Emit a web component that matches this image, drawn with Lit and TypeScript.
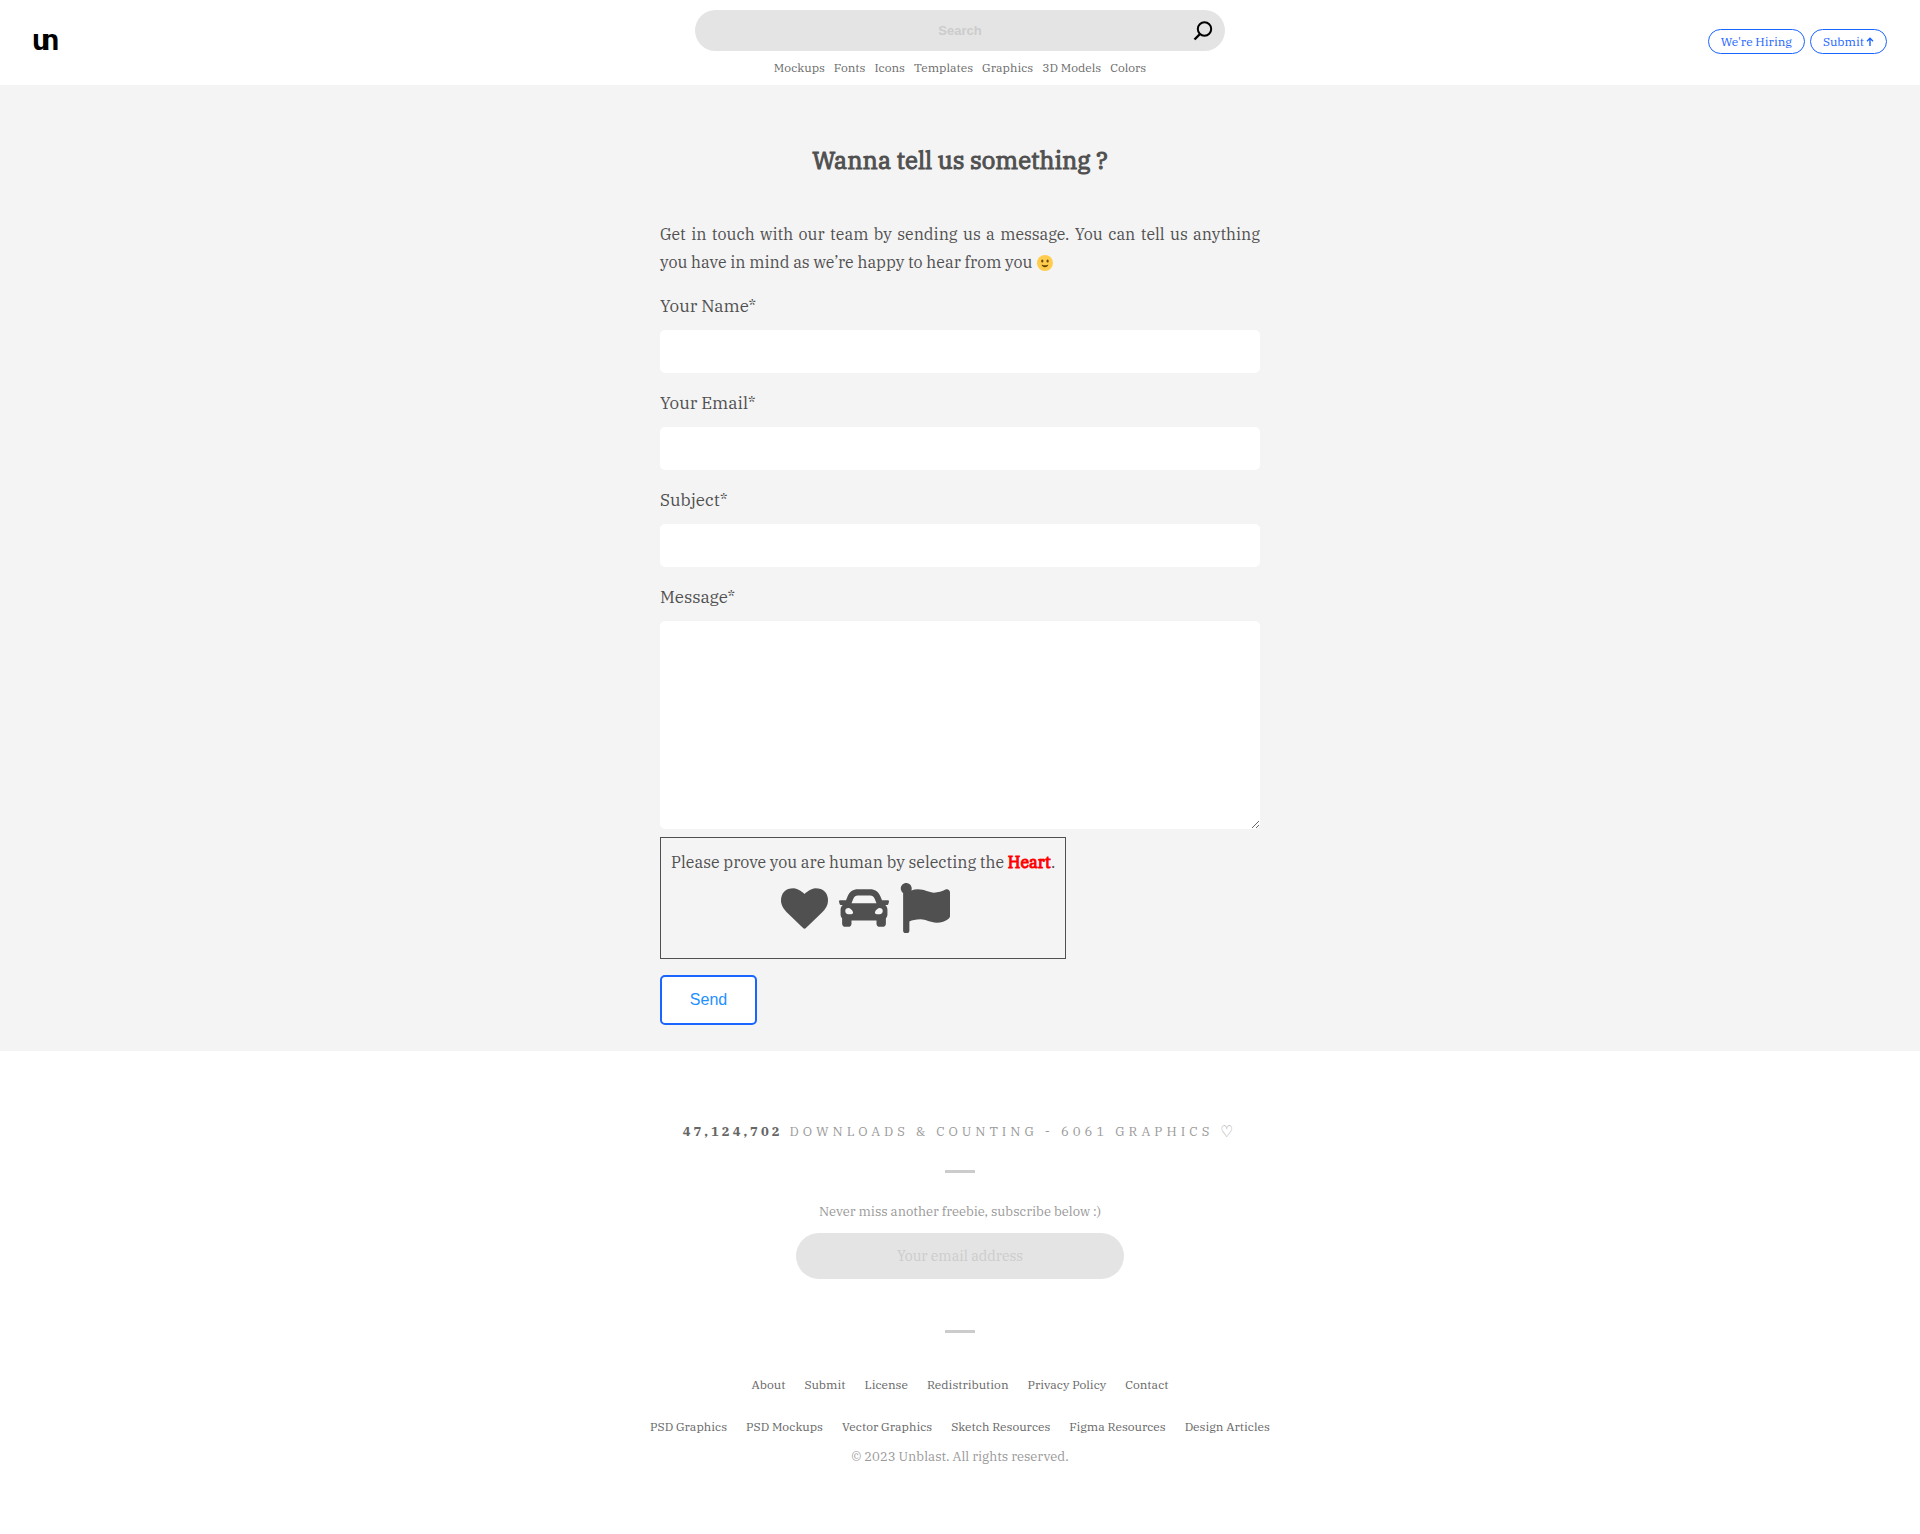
import { LitElement, html, css } from "lit";
import { customElement } from "lit/decorators.js";

const NAV = ["Mockups", "Fonts", "Icons", "Templates", "Graphics", "3D Models", "Colors"];
const SITE_LINKS = ["About", "Submit", "License", "Redistribution", "Privacy Policy", "Contact"];
const TOPIC_LINKS = [
  "PSD Graphics",
  "PSD Mockups",
  "Vector Graphics",
  "Sketch Resources",
  "Figma Resources",
  "Design Articles",
];
const FIELDS = [
  { id: "name", label: "Your Name*", type: "text" },
  { id: "email", label: "Your Email*", type: "email" },
  { id: "subject", label: "Subject*", type: "text" },
];

const links = (items: string[]) => items.map((t) => html`<a href="#">${t}</a>`);

@customElement("app-root")
export class AppRoot extends LitElement {
  static styles = css`
    :host {
      display: block;
      background: #fff;
      color: #505050;
      font-family: "IBM Plex Serif", "DejaVu Serif Condensed", "DejaVu Serif", serif;
      font-size: 16px;
    }
    * {
      box-sizing: border-box;
    }
    a {
      color: inherit;
      text-decoration: none;
    }
    input,
    textarea,
    button {
      font-family: inherit;
      margin: 0;
      outline: none;
    }
    .header {
      display: grid;
      grid-template-columns: 1fr minmax(0, 530px) 1fr;
      align-items: center;
      padding: 10px 33px 8px;
    }
    .brand,
    .actions {
      display: flex;
      padding-bottom: 4px;
    }
    .logo {
      display: block;
      width: 26px;
      height: 18px;
    }
    .logo svg {
      display: block;
      overflow: visible;
    }
    .search {
      display: flex;
      align-items: center;
      height: 41px;
      padding: 0 12px 0 45px;
      border-radius: 21px;
      background: #e4e4e4;
    }
    .search input {
      flex: 1;
      min-width: 0;
      border: 0;
      background: none;
      text-align: center;
      font: bold 13px "Liberation Sans", sans-serif;
    }
    ::placeholder {
      color: #ccc;
      opacity: 1;
    }
    .search button {
      display: flex;
      width: 20px;
      height: 20px;
      padding: 0;
      border: 0;
      background: none;
    }
    .nav {
      display: flex;
      justify-content: center;
      gap: 9px;
      margin-top: 8px;
      font-size: 12px;
      line-height: 18px;
      color: #6b6b6b;
    }
    .actions {
      justify-content: flex-end;
      gap: 5px;
    }
    .pill {
      display: flex;
      align-items: center;
      gap: 2px;
      height: 25px;
      padding: 0 12px;
      border: 1px solid #1a64ff;
      border-radius: 13px;
      color: #1a64ff;
      font-size: 12px;
    }
    .main {
      background: #f4f4f4;
      padding: 58px 20px 26px;
    }
    .column {
      max-width: 600px;
      margin: 0 auto;
    }
    h1 {
      margin: 0 0 43px;
      text-align: center;
      font-size: 24px;
      line-height: 34px;
      font-weight: 400;
      -webkit-text-stroke: 1px;
    }
    .intro {
      margin: 0 0 16px;
      text-align: justify;
      line-height: 28px;
    }
    .emoji {
      vertical-align: -3px;
    }
    .field {
      display: flex;
      flex-direction: column;
      gap: 10px;
      margin-bottom: 16px;
    }
    .field label {
      font-size: 17px;
      line-height: 28px;
    }
    .field input,
    .field textarea {
      display: block;
      width: 100%;
      height: 43px;
      padding: 10px;
      border: 0;
      border-radius: 5px;
      background: #fff;
      font-size: 16px;
    }
    .field textarea {
      height: 208px;
      resize: vertical;
    }
    .field.message {
      margin-bottom: 8px;
    }
    .captcha {
      width: fit-content;
      height: 122px;
      margin: 0 0 16px;
      padding: 10px;
      border: 1px solid #505050;
      text-align: center;
    }
    .captcha legend {
      float: left;
      width: 100%;
      padding: 0;
      line-height: 28px;
    }
    .captcha strong {
      color: #f00;
      font-weight: 400;
      -webkit-text-stroke: 1px;
    }
    .choices {
      clear: both;
      display: flex;
      justify-content: center;
      gap: 11px;
      padding: 7px 0 0 5px;
    }
    .choices label {
      display: flex;
      align-items: center;
    }
    .choices input {
      position: absolute;
      opacity: 0;
    }
    .send {
      display: block;
      width: 97px;
      height: 50px;
      border: 2px solid #1a64ff;
      border-radius: 5px;
      background: #fff;
      color: #1e90ff;
      font: 16px "Liberation Sans", sans-serif;
    }
    .footer {
      display: flex;
      flex-direction: column;
      align-items: center;
      padding: 67px 20px 64px;
      color: #999;
      font-size: 13px;
    }
    .stats {
      margin: 0;
      letter-spacing: 4px;
      line-height: 28px;
    }
    .stats strong {
      color: #666;
      letter-spacing: 3px;
    }
    .heart {
      font-size: 16px;
      line-height: 1;
      vertical-align: -1px;
    }
    .dash {
      width: 30px;
      height: 3px;
      margin: 24px 0;
      border: 0;
      background: #ccc;
    }
    .subscribe {
      display: flex;
      flex-direction: column;
      align-items: center;
      gap: 6px;
      width: 328px;
      max-width: 100%;
      margin-bottom: 27px;
    }
    .subscribe label {
      line-height: 30px;
    }
    .subscribe input {
      width: 100%;
      height: 46px;
      border: 0;
      border-radius: 23px;
      background: #e4e4e4;
      text-align: center;
      font-size: 14px;
    }
    .links {
      display: flex;
      flex-wrap: wrap;
      justify-content: center;
      gap: 0 19px;
      margin-top: 14px;
      color: #666;
      font-size: 12px;
      line-height: 28px;
    }
    .copyright {
      margin: 2px 0 0;
      line-height: 28px;
    }
  `;

  render() {
    return html`
      <header class="header">
        <div class="brand">
          <a class="logo" href="#" aria-label="un">
            <svg width="26" height="18" viewBox="0 0 26 18">
              <text x="-1 8" y="17" font-family="Liberation Sans, sans-serif" font-weight="bold" font-size="30">un</text>
            </svg>
          </a>
        </div>
        <div>
          <form class="search" role="search">
            <input type="search" placeholder="Search" aria-label="Search" />
            <button type="button" aria-label="Search">
              <svg width="20" height="20" viewBox="0 0 20 20" fill="none" stroke="#000" stroke-width="2">
                <circle cx="11.5" cy="8" r="6.7" />
                <path d="M7 13 1.5 18.5" stroke-width="2.4" />
              </svg>
            </button>
          </form>
          <nav class="nav">${links(NAV)}</nav>
        </div>
        <div class="actions">
          <a class="pill" href="#">We're Hiring</a>
          <a class="pill" href="#"
            >Submit
            <svg width="8" height="9" viewBox="0 0 8 9" fill="none" stroke="currentColor" stroke-width="1.4">
              <path d="M4 9V1.2M1 4.2 4 1.2 7 4.2" />
            </svg>
          </a>
        </div>
      </header>
      <main class="main">
        <div class="column">
          <h1>Wanna tell us something ?</h1>
          <p class="intro">
            Get in touch with our team by sending us a message. You can tell us anything you have in mind as we’re happy
            to hear from you
            <svg class="emoji" role="img" aria-label="Slightly smiling face" width="17" height="16" viewBox="-2 0 38 36">
              <circle cx="18" cy="18" r="18" fill="#ffcc4d" />
              <path
                d="M10.500 22.300c.3 1.200 2.300 5.200 7.500 5.200s7.300-4 7.500-5.200c.1-.4-.4-.8-.9-.5-.1 0-2.400 1.200-6.600 1.200s-6.500-1.200-6.600-1.200c-.5-.3-1 .1-.9.5Z"
                fill="#664500"
              />
              <ellipse cx="12" cy="13.500" rx="2.500" ry="3.500" fill="#664500" />
              <ellipse cx="24" cy="13.500" rx="2.500" ry="3.500" fill="#664500" />
            </svg>
          </p>
          <form>
            ${FIELDS.map(
              (f) => html`<div class="field">
                <label for=${f.id}>${f.label}</label>
                <input id=${f.id} type=${f.type} />
              </div>`,
            )}
            <div class="field message">
              <label for="message">Message*</label>
              <textarea id="message"></textarea>
            </div>
            <fieldset class="captcha">
              <legend>Please prove you are human by selecting the <strong>Heart</strong>.</legend>
              <div class="choices">
                <label>
                  <input type="radio" name="human" aria-label="Heart" />
                  <svg width="47" height="47" viewBox="0 0 1792 1792" fill="currentColor">
                    <path
                      d="M896 1664q-26 0-44-18l-624-602q-10-8-27.500-26T145 952.500 77 855 23.500 734 0 596q0-220 127-344t351-124q62 0 126.500 21.500t120 58T820 276t76 68q36-36 76-68t95.500-68.500 120-58T1314 128q224 0 351 124t127 344q0 221-229 450l-623 600q-18 18-44 18z"
                    />
                  </svg>
                </label>
                <label>
                  <input type="radio" name="human" aria-label="Car" />
                  <svg width="50" height="50" viewBox="0 0 512 512" fill="currentColor">
                    <path
                      d="M499.990 176h-59.870l-16.640-41.600C406.380 91.630 365.570 64 319.500 64h-127c-46.060 0-86.880 27.630-103.990 70.400L71.870 176H12.010C4.200 176-1.530 183.340.370 190.910l6 24C7.700 220.250 12.500 224 18.010 224h20.070C24.650 235.730 16 252.780 16 272v48c0 16.120 6.160 30.670 16 41.930V416c0 17.670 14.330 32 32 32h32c17.670 0 32-14.330 32-32v-32h256v32c0 17.670 14.330 32 32 32h32c17.670 0 32-14.330 32-32v-54.070c9.840-11.250 16-25.800 16-41.930v-48c0-19.220-8.650-36.270-22.070-48H494c5.510 0 10.310-3.750 11.640-9.090l6-24c1.890-7.570-3.840-14.910-11.650-14.910zm-352.060-17.830c7.290-18.220 24.940-30.170 44.570-30.170h127c19.630 0 37.280 11.950 44.570 30.170L384 208H128l19.930-49.830zM96 319.800c-19.200 0-32-12.760-32-31.900S76.800 256 96 256s48 28.710 48 47.850-28.800 15.950-48 15.950zm320 0c-19.200 0-48 3.190-48-15.950S396.800 256 416 256s32 12.760 32 31.900-12.800 31.900-32 31.900z"
                    />
                  </svg>
                </label>
                <label>
                  <input type="radio" name="human" aria-label="Flag" />
                  <svg width="50" height="50" viewBox="0 0 512 512" fill="currentColor">
                    <path
                      d="M349.565 98.783C295.978 98.783 251.721 64 184.348 64c-24.955 0-47.309 4.384-68.045 12.013a55.947 55.947 0 0 0 3.586-23.562C118.117 24.015 94.806 1.206 66.338.048 34.345-1.254 8 24.296 8 56c0 19.026 9.497 35.825 24 45.945V488c0 13.255 10.745 24 24 24h16c13.255 0 24-10.745 24-24v-94.400c28.311-12.064 63.582-22.122 114.435-22.122 53.588 0 97.844 34.783 165.217 34.783 48.169 0 86.667-16.294 122.505-40.858C506.840 359.452 512 349.571 512 339.045v-243.100c0-23.393-24.269-38.870-45.485-29.016-34.338 15.948-76.454 31.854-116.950 31.854z"
                    />
                  </svg>
                </label>
              </div>
            </fieldset>
            <button class="send" type="button">Send</button>
          </form>
        </div>
      </main>
      <footer class="footer">
        <p class="stats">
          <strong>47,124,702</strong> DOWNLOADS &amp; COUNTING - 6061 GRAPHICS <span class="heart">♡</span>
        </p>
        <hr class="dash" />
        <form class="subscribe">
          <label for="subscribe">Never miss another freebie, subscribe below :)</label>
          <input id="subscribe" type="email" placeholder="Your email address" />
        </form>
        <hr class="dash" />
        <nav class="links">${links(SITE_LINKS)}</nav>
        <nav class="links">${links(TOPIC_LINKS)}</nav>
        <p class="copyright">© 2023 Unblast. All rights reserved.</p>
      </footer>
    `;
  }
}
